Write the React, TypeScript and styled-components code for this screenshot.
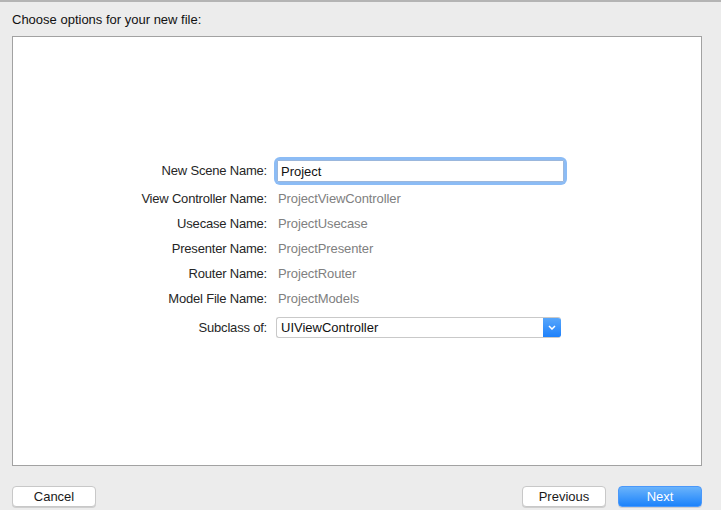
import React from "react";
import styled, { createGlobalStyle } from "styled-components";

const Global = createGlobalStyle`
  html, body { margin: 0; padding: 0; background: #ececec; }
  body { font-family: "Liberation Sans", Arial, sans-serif; font-size: 13px; color: #262626; }
  * { box-sizing: border-box; }
`;

const Window = styled.div`
  width: 721px;
  height: 510px;
  display: flex;
  flex-direction: column;
  padding: 0 19px 0 12px;
  border-top: 2px solid #b4b4b4;
  background: #ececec;
`;

const Title = styled.div`
  height: 34px;
  padding-top: 10px;
  line-height: 16px;
  color: #111;
`;

const Panel = styled.div`
  height: 430px;
  background: #fff;
  border: 1px solid #a2a2a2;
  padding-top: 123px;
`;

const Form = styled.div`
  display: grid;
  grid-template-columns: 254px 1fr;
  column-gap: 9px;
  align-items: center;
`;

const Label = styled.div<{ $h: number; $mt?: number }>`
  height: ${(p) => p.$h}px;
  line-height: ${(p) => p.$h}px;
  margin-top: ${(p) => p.$mt ?? 0}px;
  text-align: right;
  color: #262626;
  white-space: nowrap;
  letter-spacing: -0.2px;
`;

const Value = styled.div`
  height: 25px;
  line-height: 25px;
  padding-left: 2px;
  color: #808080;
  letter-spacing: -0.1px;
`;

const InputWrap = styled.div`
  width: 287px;
  height: 22px;
  margin-left: 1px;
  border-radius: 3px;
  box-shadow: 0 0 0 3px #8cbcf5;
`;

const TextInput = styled.input`
  width: 100%;
  height: 22px;
  border: 1px solid #9bb7dc;
  border-radius: 1px;
  padding: 0 0 0 3px;
  font: inherit;
  font-size: 13px;
  color: #111;
  outline: none;
  background: #fff;
`;

const Select = styled.div`
  width: 285px;
  height: 21px;
  margin-top: 6px;
  display: flex;
  align-items: stretch;
  border: 1px solid #c9c9c9;
  border-right: none;
  border-radius: 3px;
  background: #fff;
  overflow: hidden;
`;

const SelectText = styled.div`
  flex: 1;
  line-height: 19px;
  padding-left: 4px;
  color: #111;
`;

const SelectArrow = styled.div`
  width: 18px;
  margin: -1px 0;
  background: linear-gradient(#5aa8fb, #1b7ffb);
  border-radius: 0 3px 3px 0;
  display: flex;
  align-items: center;
  justify-content: center;
`;

const Footer = styled.div`
  margin-top: 20px;
  display: flex;
  align-items: flex-start;
`;

const Spacer = styled.div`
  flex: 1;
`;

const Button = styled.button<{ $primary?: boolean }>`
  width: 84px;
  height: 21px;
  padding: 0;
  margin-left: ${(p) => (p.$primary ? "12px" : "0")};
  font-family: "Liberation Sans", Arial, sans-serif;
  font-size: 13px;
  line-height: 19px;
  border-radius: 4px;
  border: 1px solid ${(p) => (p.$primary ? "#4a98fa" : "#c8c8c8")};
  color: ${(p) => (p.$primary ? "#fff" : "#1a1a1a")};
  background: ${(p) => (p.$primary ? "linear-gradient(#6ab3fb, #1c83fb)" : "#fff")};
  box-shadow: 0 1px 0 rgba(0, 0, 0, 0.12);
`;

const rows: [string, string][] = [
  ["View Controller Name:", "ProjectViewController"],
  ["Usecase Name:", "ProjectUsecase"],
  ["Presenter Name:", "ProjectPresenter"],
  ["Router Name:", "ProjectRouter"],
  ["Model File Name:", "ProjectModels"],
];

export default function App() {
  return (
    <>
      <Global />
      <Window>
        <Title>Choose options for your new file:</Title>
        <Panel>
          <Form>
            <Label $h={22}>New Scene Name:</Label>
            <InputWrap>
              <TextInput defaultValue="Project" />
            </InputWrap>
            <Label $h={4} />
            <div />
            {rows.map(([l, v]) => (
              <React.Fragment key={l}>
                <Label $h={25}>{l}</Label>
                <Value>{v}</Value>
              </React.Fragment>
            ))}
            <Label $h={21} $mt={6}>Subclass of:</Label>
            <Select>
              <SelectText>UIViewController</SelectText>
              <SelectArrow>
                <svg width="8" height="5" viewBox="0 0 8 5">
                  <path d="M1 1 L4 4 L7 1" stroke="#fff" strokeWidth="1.5" fill="none" />
                </svg>
              </SelectArrow>
            </Select>
          </Form>
        </Panel>
        <Footer>
          <Button>Cancel</Button>
          <Spacer />
          <Button>Previous</Button>
          <Button $primary>Next</Button>
        </Footer>
      </Window>
    </>
  );
}
